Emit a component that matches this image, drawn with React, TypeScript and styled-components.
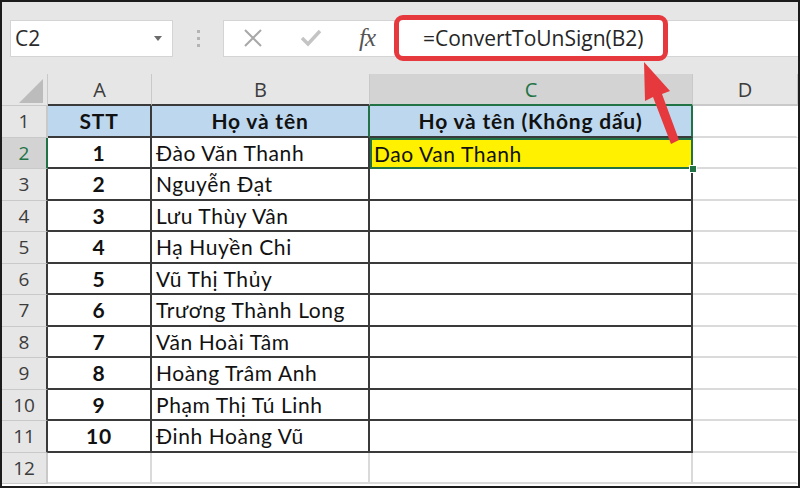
import React from "react";
import styled, { createGlobalStyle } from "styled-components";

const GlobalStyle = createGlobalStyle`
    html, body {
        margin: 0;
        padding: 0;
        background: #ffffff;
    }
    * {
        box-sizing: border-box;
    }
`;

const DARK = "#3a3a3a";
const LIGHT = "#dadada";
const GREEN = "#217346";
const HEAD_LINE = "#c9c9c9";

const people: [string, string][] = [
    ["1", "Đào Văn Thanh"],
    ["2", "Nguyễn Đạt"],
    ["3", "Lưu Thùy Vân"],
    ["4", "Hạ Huyền Chi"],
    ["5", "Vũ Thị Thủy"],
    ["6", "Trương Thành Long"],
    ["7", "Văn Hoài Tâm"],
    ["8", "Hoàng Trâm Anh"],
    ["9", "Phạm Thị Tú Linh"],
    ["10", "Đinh Hoàng Vũ"],
];

const columns = ["A", "B", "C", "D"];

const App = () => {
    const rowCount = 12;

    const renderRow = (row: number) => {
        const inTable = row <= 11;
        const isHead = row === 1;
        const person = row >= 2 && row <= 11 ? people[row - 2] : null;
        const selected = row === 2;

        return (
            <React.Fragment key={row}>
                <RowHeader
                    $active={selected}
                    $right={selected ? GREEN : inTable && !isHead ? DARK : HEAD_LINE}
                >
                    {row}
                </RowHeader>

                {/* A */}
                <Cell
                    $bg={isHead ? "#bdd7ee" : "#ffffff"}
                    $align="center"
                    $bold={inTable}
                    $right={inTable ? DARK : LIGHT}
                    $bottom={inTable ? DARK : LIGHT}
                >
                    {isHead ? "STT" : person ? person[0] : ""}
                </Cell>

                {/* B */}
                <Cell
                    $bg={isHead ? "#bdd7ee" : "#ffffff"}
                    $align={isHead ? "center" : "left"}
                    $bold={isHead}
                    $right={isHead ? GREEN : inTable ? DARK : LIGHT}
                    $bottom={inTable ? DARK : LIGHT}
                >
                    {isHead ? "Họ và tên" : person ? person[1] : ""}
                </Cell>

                {/* C */}
                {selected ? (
                    <SelectedCell>
                        Dao Van Thanh
                        <FillHandle />
                    </SelectedCell>
                ) : (
                    <Cell
                        $bg={isHead ? "#bdd7ee" : "#ffffff"}
                        $align="center"
                        $bold={isHead}
                        $right={isHead ? GREEN : inTable ? DARK : LIGHT}
                        $bottom={inTable ? DARK : LIGHT}
                    >
                        {isHead ? "Họ và tên (Không dấu)" : ""}
                    </Cell>
                )}

                {/* D */}
                <Cell $bg="#ffffff" $align="center" $right="transparent" $bottom={LIGHT} />
            </React.Fragment>
        );
    };

    return (
        <>
            <GlobalStyle />
            <Frame>
                <FormulaBar>
                    <NameBox>
                        <NameText>C2</NameText>
                        <svg width="8" height="5" viewBox="0 0 8 5">
                            <polygon points="0,0 8,0 4,5" fill="#6b6b6b" />
                        </svg>
                    </NameBox>
                    <Grip>
                        <Dot />
                        <Dot />
                        <Dot />
                    </Grip>
                    <FormulaBox>
                        <IconSlot $width={58}>
                            <svg width="20" height="20" viewBox="0 0 20 20">
                                <path d="M2 2 L18 18 M18 2 L2 18" stroke="#a8a8a8" strokeWidth="2" fill="none" />
                            </svg>
                        </IconSlot>
                        <IconSlot $width={58}>
                            <svg width="22" height="18" viewBox="0 0 22 18">
                                <path d="M2 9 L8 15 L20 2" stroke="#c4c4c4" strokeWidth="3.4" fill="none" />
                            </svg>
                        </IconSlot>
                        <IconSlot $width={54}>
                            <Fx>fx</Fx>
                        </IconSlot>
                        <Highlight>=ConvertToUnSign(B2)</Highlight>
                    </FormulaBox>
                </FormulaBar>

                <Sheet>
                    <Corner>
                        <svg width="24" height="24" viewBox="0 0 24 24">
                            <polygon points="24,0 24,24 0,24" fill="#bcbcbc" />
                        </svg>
                    </Corner>
                    {columns.map((col) => (
                        <ColHeader
                            key={col}
                            $active={col === "C"}
                            $bottom={col === "C" ? GREEN : col === "D" ? HEAD_LINE : DARK}
                        >
                            {col}
                        </ColHeader>
                    ))}
                    {Array.from({ length: rowCount }, (_, i) => renderRow(i + 1))}
                </Sheet>

                <Arrow viewBox="0 0 800 488" width="800" height="488">
                    <polygon
                        points="644,62 670,91 662,94 679,140 671,144 653,97 645,101"
                        fill="#e5393d"
                    />
                </Arrow>
            </Frame>
        </>
    );
};

export default App;

// Styled components
const Frame = styled.div`
    position: relative;
    width: 800px;
    height: 488px;
    border: 2px solid #1c1c1c;
    background-color: #ffffff;
    display: flex;
    flex-direction: column;
    overflow: hidden;
`;

const FormulaBar = styled.div`
    display: flex;
    align-items: center;
    height: 72px;
    padding-left: 8px;
    background-color: #e6e6e6;
    flex-shrink: 0;
`;

const NameBox = styled.div`
    display: flex;
    align-items: center;
    justify-content: space-between;
    width: 163px;
    height: 37px;
    padding: 0 10px 0 4px;
    background-color: #ffffff;
    border: 1px solid #d4d4d4;
`;

const NameText = styled.span`
    font-family: "Open Sans", "Noto Sans", sans-serif;
    font-size: 21px;
    color: #2b2b2b;
`;

const Grip = styled.div`
    display: flex;
    flex-direction: column;
    align-items: center;
    justify-content: center;
    gap: 4px;
    width: 50px;
`;

const Dot = styled.span`
    width: 3px;
    height: 3px;
    background-color: #b4b4b4;
`;

const FormulaBox = styled.div`
    flex: 1;
    display: flex;
    align-items: center;
    height: 37px;
    background-color: #ffffff;
    border: 1px solid #d4d4d4;
    border-right: none;
`;

const IconSlot = styled.div<{ $width: number }>`
    display: flex;
    align-items: center;
    justify-content: center;
    width: ${(p) => p.$width}px;
    height: 100%;
`;

const Fx = styled.span`
    font-family: "Liberation Serif", "DejaVu Serif", serif;
    font-style: italic;
    font-size: 25px;
    color: #555555;
    letter-spacing: -1px;
`;

const Highlight = styled.div`
    display: flex;
    align-items: center;
    width: 274px;
    height: 46px;
    padding-left: 24px;
    border: 5px solid #e5393d;
    border-radius: 9px;
    background-color: #ffffff;
    font-family: "Open Sans", "Noto Sans", sans-serif;
    font-size: 21px;
    color: #262626;
    white-space: nowrap;
`;

const Sheet = styled.div`
    display: grid;
    grid-template-columns: 46px 104px 218px 323px 1fr;
    grid-template-rows: 32px repeat(12, 31.5px);
    background-color: #ffffff;
`;

const Corner = styled.div`
    display: flex;
    align-items: flex-end;
    justify-content: flex-end;
    padding: 0 4px 2px 0;
    background-color: #e6e6e6;
    border-right: 1px solid ${HEAD_LINE};
    border-bottom: 1px solid ${HEAD_LINE};
`;

const ColHeader = styled.div<{ $active: boolean; $bottom: string }>`
    display: flex;
    align-items: center;
    justify-content: center;
    background-color: ${(p) => (p.$active ? "#d3d3d3" : "#e6e6e6")};
    color: ${(p) => (p.$active ? GREEN : "#3c3c3c")};
    border-right: 1px solid ${HEAD_LINE};
    border-bottom: 2px solid ${(p) => p.$bottom};
    font-family: "Open Sans", "Noto Sans", sans-serif;
    font-size: 20px;
`;

const RowHeader = styled.div<{ $active: boolean; $right: string }>`
    display: flex;
    align-items: center;
    justify-content: center;
    background-color: ${(p) => (p.$active ? "#d3d3d3" : "#e6e6e6")};
    color: ${(p) => (p.$active ? GREEN : "#3c3c3c")};
    border-right: 2px solid ${(p) => p.$right};
    border-bottom: 1px solid ${HEAD_LINE};
    font-family: "Open Sans", "Noto Sans", sans-serif;
    font-size: 19px;
`;

const Cell = styled.div<{
    $bg: string;
    $align: "left" | "center";
    $bold?: boolean;
    $right: string;
    $bottom: string;
}>`
    display: flex;
    align-items: center;
    justify-content: ${(p) => (p.$align === "center" ? "center" : "flex-start")};
    padding-left: ${(p) => (p.$align === "center" ? "0" : "4px")};
    background-color: ${(p) => p.$bg};
    border-right: 2px solid ${(p) => p.$right};
    border-bottom: 2px solid ${(p) => p.$bottom};
    font-family: "Lato", "Noto Sans", sans-serif;
    font-size: 21px;
    font-weight: ${(p) => (p.$bold ? 700 : 400)};
    letter-spacing: ${(p) => (p.$bold ? "0.8px" : "0.6px")};
    color: #111111;
    white-space: nowrap;
    overflow: hidden;
`;

const SelectedCell = styled.div`
    position: relative;
    display: flex;
    align-items: center;
    padding-left: 4px;
    background-color: #fff100;
    outline: 2px solid ${GREEN};
    outline-offset: -2px;
    font-family: "Lato", "Noto Sans", sans-serif;
    font-size: 21px;
    letter-spacing: 0.6px;
    color: #111111;
    z-index: 1;
`;

const FillHandle = styled.span`
    position: absolute;
    right: -4px;
    bottom: -4px;
    width: 8px;
    height: 8px;
    background-color: ${GREEN};
    border: 1px solid #ffffff;
`;

const Arrow = styled.svg`
    position: absolute;
    left: -2px;
    top: -2px;
    pointer-events: none;
    z-index: 5;
`;
